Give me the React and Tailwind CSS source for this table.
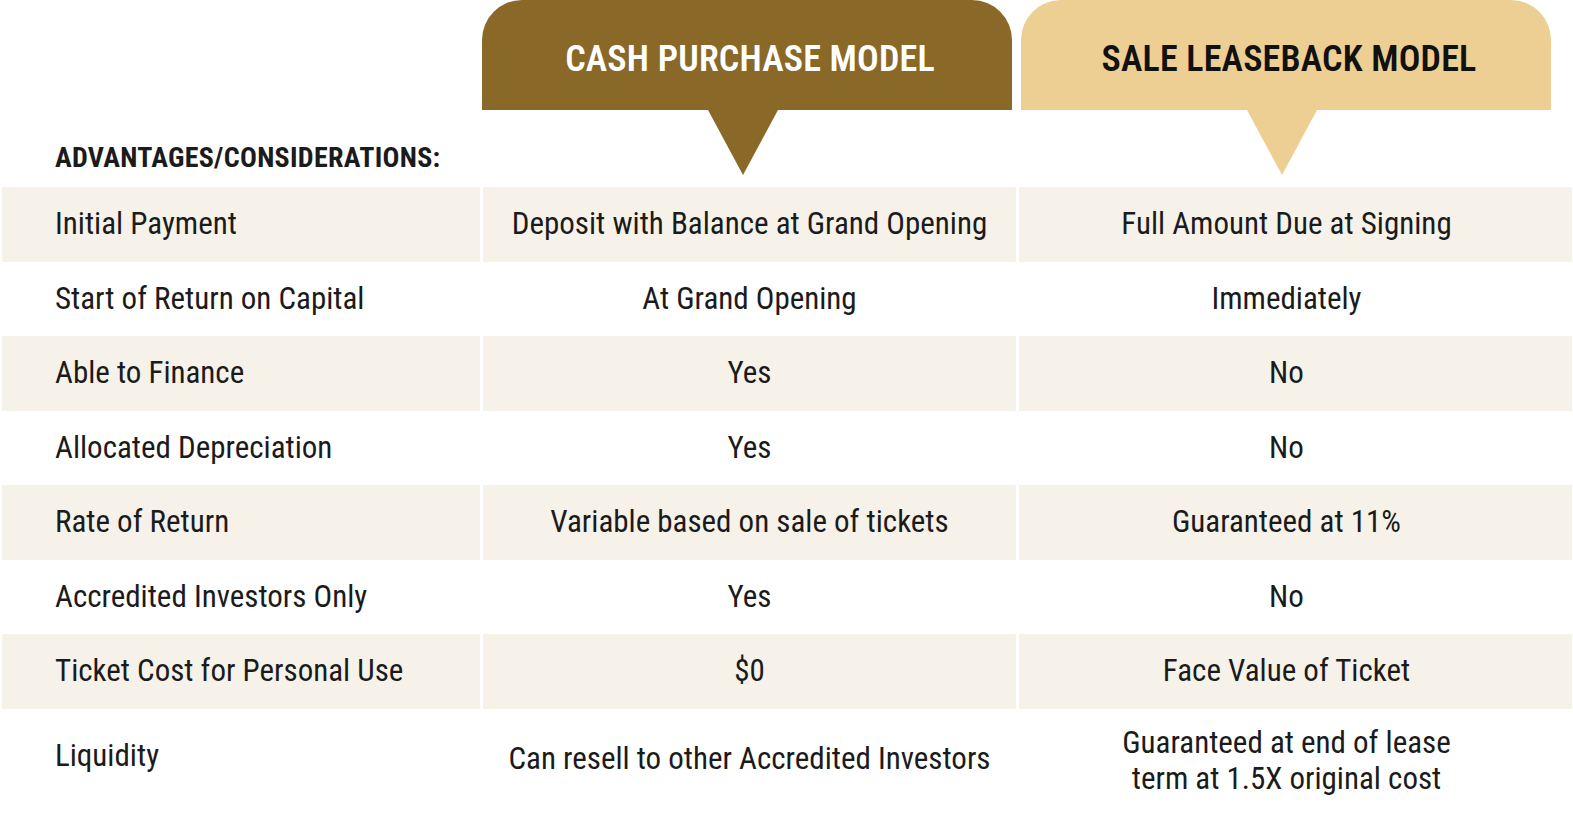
const rows = [
  { label: "Initial Payment", cash: "Deposit with Balance at Grand Opening", lease: "Full Amount Due at Signing" },
  { label: "Start of Return on Capital", cash: "At Grand Opening", lease: "Immediately" },
  { label: "Able to Finance", cash: "Yes", lease: "No" },
  { label: "Allocated Depreciation", cash: "Yes", lease: "No" },
  { label: "Rate of Return", cash: "Variable based on sale of tickets", lease: "Guaranteed at 11%" },
  { label: "Accredited Investors Only", cash: "Yes", lease: "No" },
  { label: "Ticket Cost for Personal Use", cash: "$0", lease: "Face Value of Ticket" },
];

const Tab = ({ title, bg, fill, text, shift }) => (
  <div className={`flex flex-col ${shift}`}>
    <div className={`w-[530px] h-[110px] rounded-t-[40px] flex items-center justify-center ${bg}`}>
      <span className={`text-[36px] font-semibold tracking-[0.2px] leading-none mt-[8px] ml-[6px] ${text}`}>{title}</span>
    </div>
    <svg width="70" height="65" viewBox="0 0 70 65" className="ml-[226px] block">
      <polygon points="0,0 70,0 35,65" fill={fill} />
    </svg>
  </div>
);

export default function App() {
  return (
    <div
      className="w-full bg-white text-[#1b1b1b] pl-[2px] pr-[1px]"
      style={{ fontFamily: '"Roboto Condensed", "Liberation Sans", sans-serif' }}
    >
      {/* header */}
      <div className="grid grid-cols-[478px_533px_1fr] gap-x-[3px] h-[187px]">
        <div className="flex flex-col justify-end pb-[13px] pl-[53px]">
          <h2 className="text-[28px] font-bold leading-[32px] tracking-[0.3px]">ADVANTAGES/CONSIDERATIONS:</h2>
        </div>
        <Tab title="CASH PURCHASE MODEL" bg="bg-[#8a6828]" fill="#8a6828" text="text-white" shift="-ml-[1px]" />
        <Tab title="SALE LEASEBACK MODEL" bg="bg-[#edcf93]" fill="#edcf93" text="text-[#111]" shift="ml-[2px]" />
      </div>

      {/* rows */}
      <div className="flex flex-col text-[31px] leading-[36px]">
        {rows.map((r, i) => {
          const stripe = i % 2 === 0 ? "bg-[#f6f2ea]" : "bg-white";
          return (
            <div key={r.label} className="grid grid-cols-[478px_533px_1fr] gap-x-[3px] h-[74.5px]">
              <div className={`flex items-center pl-[53px] ${stripe}`}>{r.label}</div>
              <div className={`flex items-center justify-center ${stripe}`}>{r.cash}</div>
              <div className={`flex items-center justify-center pr-[18px] ${stripe}`}>{r.lease}</div>
            </div>
          );
        })}
        <div className="grid grid-cols-[478px_533px_1fr] gap-x-[3px] h-[100px]">
          <div className="flex items-center pl-[53px] pb-[6px]">Liquidity</div>
          <div className="flex items-center justify-center">Can resell to other Accredited Investors</div>
          <div className="flex flex-col items-center justify-center pr-[18px] pt-[4px] text-center">
            <span>Guaranteed at end of lease</span>
            <span>term at 1.5X original cost</span>
          </div>
        </div>
      </div>
    </div>
  );
}
